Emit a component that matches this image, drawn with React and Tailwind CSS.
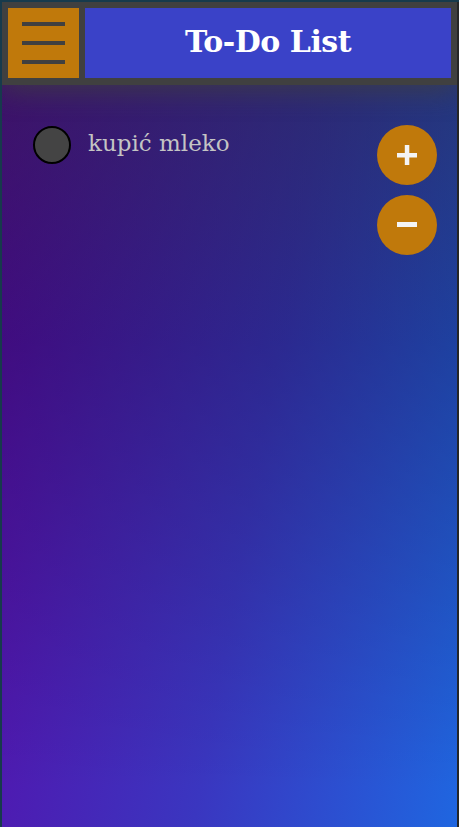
import React, { useState } from 'react';

const App = () => {
  const [todos] = useState([{ id: 1, text: 'kupić mleko', done: false }]);

  return (
    <div className="h-screen bg-[#173a4c] pl-[2px] pt-[2px] flex font-['DejaVu_Serif',serif]">
      <div className="flex-1 flex flex-col border-r-[2px] border-[#262626] overflow-hidden">
        {/* Header */}
        <header className="flex gap-[6px] bg-[#404040] px-[6px] pt-[6px] pb-[7px] shadow-[0_4px_28px_rgba(64,64,64,0.8)] relative z-10">
          <button className="w-[71px] h-[70px] bg-[#c0790b] flex flex-col items-center justify-center gap-[15px]">
            <span className="block w-[43px] h-[4px] bg-[#404040]" />
            <span className="block w-[43px] h-[4px] bg-[#404040]" />
            <span className="block w-[43px] h-[4px] bg-[#404040]" />
          </button>
          <div className="flex-1 h-[70px] bg-[#3a42c8] flex items-center justify-center">
            <h1 className="text-white text-[30px] font-bold tracking-[-0.5px] -mt-[3px]">To-Do List</h1>
          </div>
        </header>

        {/* List */}
        <main className="flex-1 flex justify-between items-start pt-[40px] pl-[31px] pr-[20px] bg-[image:linear-gradient(to_bottom,rgba(30,30,40,0.5),rgba(0,0,0,0.25)_35%,transparent_95%),linear-gradient(100deg,#5a0aa8,#3a36c0_55%,#1f66e0)]">
          <ul className="flex flex-col gap-3 pt-[1px]">
            {todos.map((t) => (
              <li key={t.id} className="flex items-center gap-[17px]">
                <span className="block w-[38px] h-[38px] rounded-full bg-[#444] border-2 border-black" />
                <span className="text-[#c4c4c4] text-[23px] font-light -mt-[3px]">{t.text}</span>
              </li>
            ))}
          </ul>

          <div className="flex flex-col gap-[10px]">
            <button className="w-[60px] h-[60px] rounded-full bg-[#c0790b] text-white flex items-center justify-center">
              <svg width="20" height="20" viewBox="0 0 20 20">
                <rect x="0" y="8" width="20" height="4.5" fill="#f4f4f4" />
                <rect x="7.8" y="0" width="4.5" height="20" fill="#f4f4f4" />
              </svg>
            </button>
            <button className="w-[60px] h-[60px] rounded-full bg-[#c0790b] text-white flex items-center justify-center">
              <svg width="20" height="6" viewBox="0 0 20 6">
                <rect x="0" y="0" width="20" height="5" fill="#f4f4f4" />
              </svg>
            </button>
          </div>
        </main>
      </div>
    </div>
  );
};

export default App;
